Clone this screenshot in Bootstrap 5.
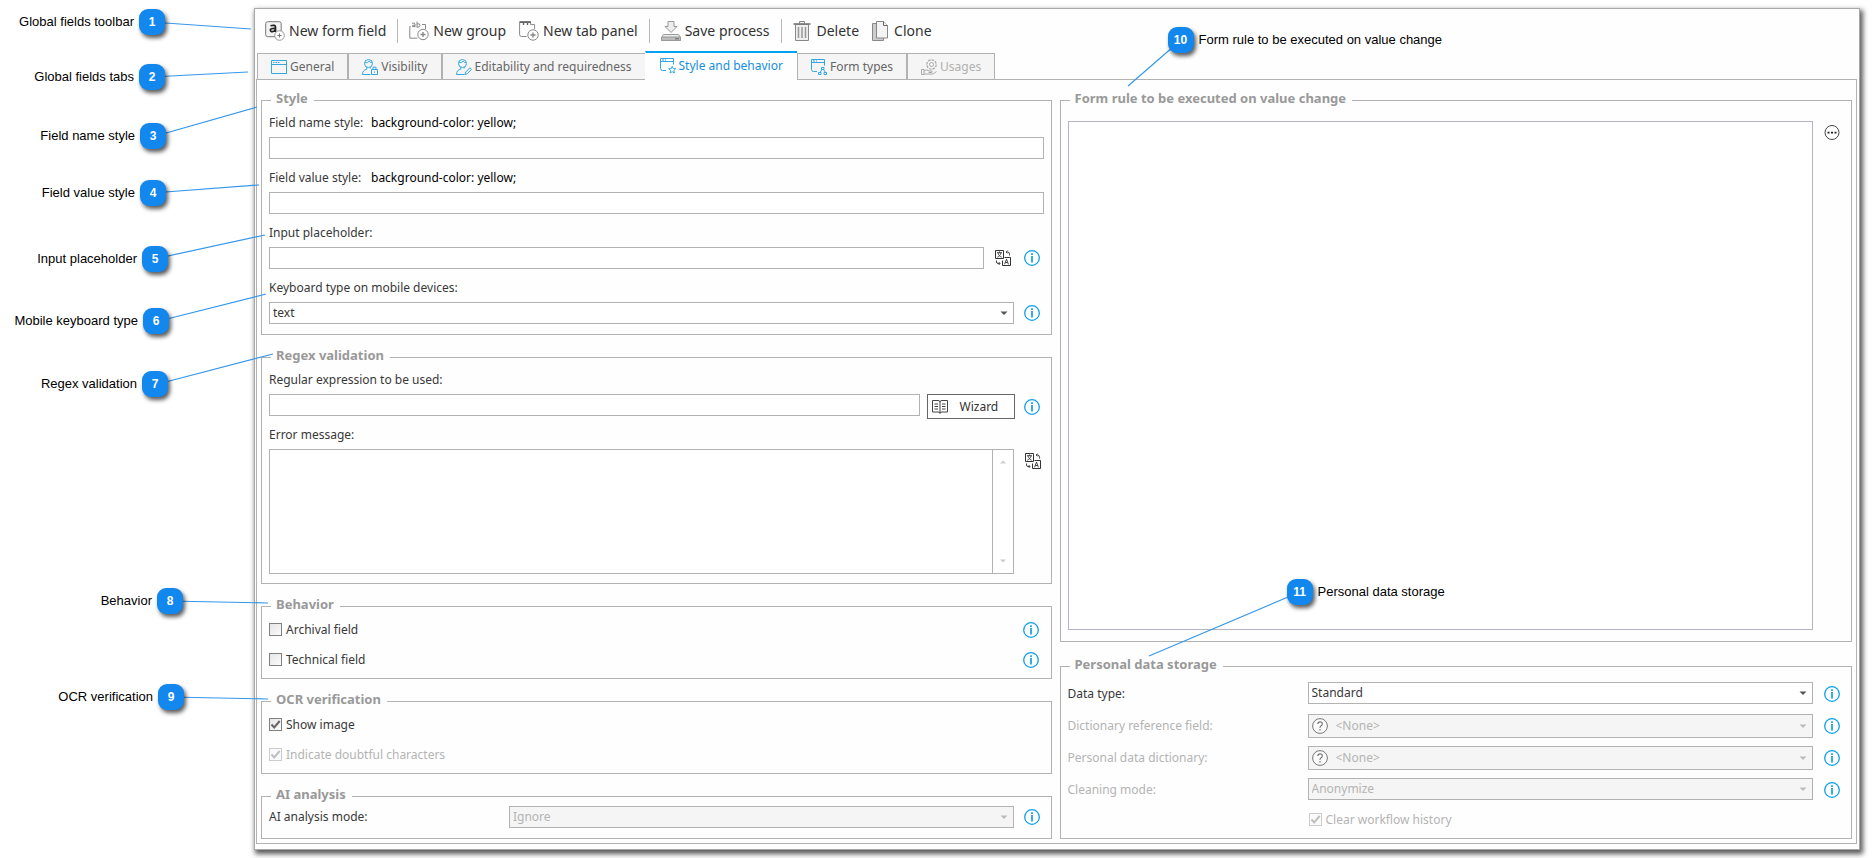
<!doctype html>
<html lang="en">
<head>
<meta charset="utf-8">
<meta name="viewport" content="width=device-width, initial-scale=1">
<title>Global fields – Style and behavior</title>
<link href="https://cdn.jsdelivr.net/npm/bootstrap@5.3.0/dist/css/bootstrap.min.css" rel="stylesheet">
<style>
:root { --line: #b2b2b2; --ink: #383838; --mute: #b4b4b4; --accent: #0f9fe6; --callout: #1287ee; }
body { font: 12px/18px "Noto Sans", sans-serif; color: var(--ink); background: #fff; }
svg { display: block; flex: none; }

.stage { position: relative; padding: 8px 12px 8px 254px; }
.app-window { padding: 0 2px 5px 1px; min-width: 1100px; background: #fefefe;
  border: 1px solid #a8a8a8; box-shadow: 2px 3px 5px 1px rgba(0,0,0,.65); }

/* toolbar */
.toolbar { height: 44px; padding-left: 9px; gap: 13px; }
.tool { display: flex; align-items: center; gap: 4px; padding: 0; border: 0; background: none;
  font: 14px/20px "Noto Sans", sans-serif; color: #333; white-space: nowrap; }
.tool-sep { width: 1px; height: 24px; background: #b8b8b8; }
.toolbar .tool-sep { margin: 0 -2px; }

/* tabs */
.page-tabs { height: 27px; margin-bottom: -1px; padding-left: 1px; }
.page-tabs .tab-btn { display: flex; align-items: center; gap: 3px; height: 27px; padding: 0 13px;
  border: 1px solid var(--line); background: #f5f5f5; color: #666; font: 12px/18px "Noto Sans", sans-serif; white-space: nowrap; }
.page-tabs .tab-btn.active { position: relative; height: 29px; margin: -2px 0 0 -1px; padding: 0 14px;
  border-top: 2px solid #00a2f2; border-bottom-color: #fefefe; border-left-color: #fefefe; border-right: 0; background: #fefefe; color: #1590de; }
.page-tabs .tab-btn:disabled { color: #b0b0b0; }

.tab-body { border: 1px solid var(--line); padding: 11px 4px 4px; display: grid; grid-template-columns: calc(50% - 5px) 1fr; column-gap: 8px; }
.tab-body > div { min-width: 0; }

/* group boxes */
.group { border: 1px solid var(--line); padding: 4px 7px 8px; margin: 0; min-width: 0; }
.group > legend { float: none; width: auto; margin: 0 0 0 2px; padding: 0 6px 4px 5px; font-size: 13px; line-height: 14px; font-weight: 700; color: #999; }
.left-col { gap: 13px; }
.right-col { gap: 15px; }
.group-style { padding-bottom: 10px; }
.group-regex { padding-bottom: 9px; }
.group-checks { padding-top: 5px; }
.group-mode { padding-top: 1px; padding-bottom: 10px; }
.group-rule { padding-top: 12px; padding-bottom: 11px; }
.group-data { padding-top: 7px; }

.cap { display: block; margin-bottom: 4px; line-height: 20px; }
.cap-name { width: 102px; }
.cap-sample { color: #000; }
.cap-side { width: 240px; flex: none; }
.field-row + .cap { margin-top: 9px; }
.cap-memo { margin-top: 6px; }
.field-row { padding-right: 4px; }

.box, .pick { display: block; flex: 1 1 0; min-width: 0; height: 22px; border: 1px solid var(--line); border-radius: 0;
  padding: 0 3px; background-color: #fff; color: var(--ink); font: 12px/18px "Noto Sans", sans-serif; }
.box { width: 100%; }
.pick { appearance: none; background-repeat: no-repeat; background-position: right 5px center;
  background-image: url("data:image/svg+xml,%3Csvg xmlns='http://www.w3.org/2000/svg' width='8' height='5'%3E%3Cpath d='M.5.5h7L4 4z' fill='%23555'/%3E%3C/svg%3E"); }
.pick:disabled { color: var(--mute); opacity: 1; background-color: #f5f5f5;
  background-image: url("data:image/svg+xml,%3Csvg xmlns='http://www.w3.org/2000/svg' width='8' height='5'%3E%3Cpath d='M.5.5h7L4 4z' fill='%23bbb'/%3E%3C/svg%3E"); }
.pick-tall { height: 24px; width: 100%; padding-left: 27px; }
.pick-icon { left: 4px; top: 4px; pointer-events: none; }

.icon-btn { padding: 0; border: 0; background: none; color: #333; }
.lang-btn { margin: 0 3px 0 11px; }
.info-btn { padding: 0; border: 0; background: none; color: var(--accent); margin-left: 10px; }
.right-col .info-btn { margin-left: 11px; }
.wizard { width: 88px; height: 25px; margin: 0 -1px 0 7px; padding: 0 4px; border: 1px solid #666; background: #fff; color: #333; gap: 12px; }

.memo { height: 125px; border: 1px solid var(--line); background: #fff; }
.memo textarea, .rule-text { border: 0; resize: none; outline: 0; background: #fff; min-width: 0; }
.memo-bar { width: 21px; border-left: 1px solid var(--line); padding: 10px 6px; color: #ccc; }
.rule-text { border: 1px solid #b4b4c4; display: block; }

.tick-row { height: 20px; padding-right: 5px; }
.tick-row + .tick-row { margin-top: 10px; }
.tick { appearance: none; width: 13px; height: 13px; margin: 0 4px 2px 0; flex: none; border: 1px solid #808080; background: linear-gradient(135deg, #e6e6e6, #fbfbfb); }
.tick:checked { background: url("data:image/svg+xml,%3Csvg xmlns='http://www.w3.org/2000/svg' width='11' height='11'%3E%3Cpath d='M1.5 5.5l2.7 3L9.7 2' fill='none' stroke='%23666' stroke-width='2'/%3E%3C/svg%3E") center, linear-gradient(135deg, #e6e6e6, #fbfbfb); }
.tick:disabled { border-color: #ccc; }
.tick:disabled:checked { background: url("data:image/svg+xml,%3Csvg xmlns='http://www.w3.org/2000/svg' width='11' height='11'%3E%3Cpath d='M1.5 5.5l2.7 3L9.7 2' fill='none' stroke='%23c0c0c0' stroke-width='2'/%3E%3C/svg%3E") center, #fafafa; }
.dim { color: var(--mute); }

.data-row { height: 24px; margin-bottom: 8px; padding-right: 4px; }
.tick-row.indent { padding-left: 241px; }

/* numbered callouts pinned over the window */
.callouts { position: absolute; left: 0; top: 1px; width: 0; height: 0; z-index: 5; font: 13px/18px "Liberation Sans", Arial, sans-serif; color: #000; }
.callouts svg { position: absolute; left: 0; top: 0; overflow: visible; stroke: #3797ea; stroke-width: 1.2; pointer-events: none; }
.pin { position: absolute; left: var(--x); top: var(--y); display: flex; align-items: center; gap: 5px; white-space: nowrap; }
.pin-left { left: auto; right: calc(0px - var(--x) - 26px); }
.pin-num { width: 26px; height: 26px; border-radius: 9px; background: var(--callout); color: #fff; font-weight: 700; font-size: 12px; line-height: 26px; text-align: center; box-shadow: 2px 3px 4px rgba(0,0,0,.65); }
</style>
</head>
<body>

<svg width="0" height="0" class="position-absolute" aria-hidden="true">
  <symbol id="i-info" viewBox="0 0 16 16"><circle cx="8" cy="8" r="7.3" fill="#fff" stroke="currentColor" stroke-width="1.3"/><path d="M8 3.2v1.7M8 6v6.6" stroke="currentColor" stroke-width="1.7"/></symbol>
  <symbol id="i-lang" viewBox="0 0 16 16"><g fill="none" stroke="currentColor"><path d="M.5.5h8v8h-8zM9.500 7.500h6v8h-8v-5"/><path d="M2 2.700h5M4.500 1.500v1.200M6 3c-.4 2-1.800 3.400-3.700 4.200M3 3c.4 2 1.800 3.400 3.700 4.200M9.600 14.300l1.900-5.200 1.900 5.200M10.300 12.500h2.400" stroke-width=".9"/><path d="M11.200 2h1.500q1.800 0 1.800 2.200V5.500M12.500.6L11.200 2l1.300 1.400M1.500 10.500V12q0 1.500 1.500 1.500h1.800M3.700 12l1.300 1.500-1.300 1.500" stroke-width=".9"/></g></symbol>
  <symbol id="i-help" viewBox="0 0 16 16"><circle cx="8" cy="8" r="7.400" fill="#fbfbfb" stroke="#777"/><path d="M5.800 6q.1-2.200 2.300-2.200T10.300 5.900q0 1-1.200 1.800T8 9.700M8 11v1.600" fill="none" stroke="#777" stroke-width="1.200"/></symbol>
  <symbol id="i-window" viewBox="0 0 16 14"><path d="M.5.5h15v13H.5zM.5 4.500h15" fill="none" stroke="#35a7e0"/><path d="M2 2.500h1.500M4.500 2.500H6M7 2.500h1.500" stroke="#35a7e0"/></symbol>
  <symbol id="i-person" viewBox="0 0 16 16"><g fill="none" stroke="#35a7e0"><circle cx="6.500" cy="4.500" r="4"/><path d="M2.700 3.800q3 .3 4.500-1.600 1.200 1.600 3 1.600M4.800 8v2.200Q.5 11 .5 15.500h8M8.200 8v1.500"/></g></symbol>
</svg>

<div class="stage">

<main class="app-window">
  <div class="toolbar d-flex align-items-center" role="toolbar" aria-label="Global fields toolbar">
    <button type="button" class="tool">
      <svg width="20" height="20" viewBox="0 0 20 20" fill="none" stroke="#777"><rect x=".7" y=".7" width="15.500" height="15" rx="2" fill="#f4f4f4"/><path d="M5.500 4.800q5-1.300 5 1.200v5M10.300 7.500q-5-.3-5 1.600c0 2.200 4 2.200 5-.4" stroke="#222" stroke-width="1.700"/><circle cx="14.500" cy="14.500" r="4.800" fill="#fff" stroke="#999"/><path d="M12.500 14.500h4M14.500 12.500v4"/></svg>
      New form field</button>
    <span class="tool-sep"></span>
    <button type="button" class="tool">
      <svg width="20" height="20" viewBox="0 0 20 20" fill="none" stroke="#888"><path d="M1.500 5.500H.8v11.700h7.700M13 3.500h3.500V8"/><path d="M3 2.200q3-.8 3 1v3M6 4.200q-3-.2-3 .8t3 .3M8 .5v6M8 3q3-1 3 1.300T8 6"/><circle cx="14" cy="13.500" r="5.200" fill="#fff"/><path d="M11.500 13.500h5M14 11v5" stroke-width="1.400"/></svg>
      New group</button>
    <button type="button" class="tool">
      <svg width="20" height="20" viewBox="0 0 20 20" fill="none" stroke="#888"><path d="M7.500 15.500H2.500Q.6 15.500.6 13.500V.6h11v3h4V8" /><path d="M1 1.200h11M4.500 1v3M8.500 1v3" stroke="#666" stroke-width="1.400"/><circle cx="14" cy="14" r="5.200" fill="#fff"/><path d="M11.500 14h5M14 11.500v5" stroke-width="1.400"/></svg>
      New tab panel</button>
    <span class="tool-sep"></span>
    <button type="button" class="tool">
      <svg width="20" height="20" viewBox="0 0 20 20" fill="#eee" stroke="#999"><path d="M7 .5h6v5h3l-6 6-6-6h3z"/><path d="M2.500 13.500h15l2 3v3H.5v-3z"/><path d="M.5 16h19v3.500H.5z" fill="#bbb"/><path d="M14 17.800h4" stroke="#666"/></svg>
      Save process</button>
    <span class="tool-sep"></span>
    <button type="button" class="tool">
      <svg width="20" height="20" viewBox="0 0 20 20" fill="#eee" stroke="#888"><path d="M6.500 2.500v-2h5v2M2.500 3.500h13V19.500h-13z"/><path d="M.5 3h17" stroke="#777" stroke-width="1.600"/><path d="M5.500 6v11M9 6v11M12.500 6v11" stroke-width="1.500" stroke="#999"/></svg>
      Delete</button>
    <button type="button" class="tool">
      <svg width="18" height="20" viewBox="0 0 18 20" fill="#f4f4f4" stroke="#888"><path d="M.5 2.500h11v17H.5z" fill="#ccc"/><path d="M4.500.5h7l4 4V17h-11z"/><path d="M11.500.5v4h4" stroke="#666"/></svg>
      Clone</button>
  </div>

  <div class="page-tabs d-flex" role="tablist">
    <button type="button" role="tab" class="tab-btn"><svg width="16" height="14"><use href="#i-window"/></svg>General</button>
    <button type="button" role="tab" class="tab-btn"><svg width="16" height="16"><use href="#i-person"/><path d="M9.500 10.500h6v5h-6zM11 10.500V8.200h3v2.300M12.500 12.500v1.200" fill="#f5f5f5" stroke="#35a7e0"/></svg>Visibility</button>
    <button type="button" role="tab" class="tab-btn"><svg width="16" height="16"><use href="#i-person"/><path d="M9 15.500l.6-2.400 4.300-4.300 1.600 1.600-4.300 4.300z" fill="#f5f5f5" stroke="#35a7e0"/></svg>Editability and requiredness</button>
    <button type="button" role="tab" class="tab-btn active" aria-selected="true"><svg width="16" height="16" fill="none" stroke="#35a7e0"><path d="M6 12.500H2.500q-2 0-2-2V.5h13v6M.5 3.500h13M2 2h2M5 2h1"/><path d="M12.200 8.300l1 2.300 2.500.2-1.900 1.700.6 2.500-2.200-1.300L10 15l.6-2.500-1.900-1.700 2.500-.2z"/></svg>Style and behavior</button>
    <button type="button" role="tab" class="tab-btn"><svg width="16" height="16" fill="none" stroke="#35a7e0"><path d="M6 12.500H2.500q-2 0-2-2V.5h13v6M.5 3.500h13M2 2h2M5 2h1"/><path d="M10.500 8.500h2.500v2h-2.500zM7.500 13.500H10v2H7.500zM13 13.500h2.500v2H13zM11 10.500l-2 3M12.500 10.500l2 3"/></svg>Form types</button>
    <button type="button" role="tab" class="tab-btn" disabled><svg width="16" height="16" fill="none" stroke="#aaa"><circle cx="10.500" cy="5.500" r="2"/><circle cx="10.500" cy="5.500" r="4.700" stroke-width="1.300" stroke-dasharray="2.600 1"/><path d="M.5 10.500H3v5H.5zM3 11.500q3-1.300 5 .5h3v1.500H7.500M3 15h9l3.500-2.500"/></svg>Usages</button>
  </div>

  <div class="tab-body">
    <div class="left-col d-flex flex-column">

      <fieldset class="group group-style">
        <legend>Style</legend>
        <label class="cap d-flex" for="nameStyle"><span class="cap-name">Field name style:</span><span class="cap-sample">background-color: yellow;</span></label>
        <div class="field-row d-flex pe-0"><input id="nameStyle" type="text" class="box"></div>
        <label class="cap d-flex" for="valueStyle"><span class="cap-name">Field value style:</span><span class="cap-sample">background-color: yellow;</span></label>
        <div class="field-row d-flex pe-0"><input id="valueStyle" type="text" class="box"></div>
        <label class="cap" for="placeholderText">Input placeholder:</label>
        <div class="field-row d-flex align-items-center">
          <input id="placeholderText" type="text" class="box">
          <button type="button" class="icon-btn lang-btn" aria-label="Translate"><svg width="16" height="16"><use href="#i-lang"/></svg></button>
          <button type="button" class="info-btn" aria-label="Info"><svg width="16" height="16"><use href="#i-info"/></svg></button>
        </div>
        <label class="cap" for="keyboardType">Keyboard type on mobile devices:</label>
        <div class="field-row d-flex align-items-center">
          <select id="keyboardType" class="pick"><option>text</option></select>
          <button type="button" class="info-btn" aria-label="Info"><svg width="16" height="16"><use href="#i-info"/></svg></button>
        </div>
      </fieldset>

      <fieldset class="group group-regex">
        <legend>Regex validation</legend>
        <label class="cap" for="regex">Regular expression to be used:</label>
        <div class="d-flex align-items-start pe-1">
          <input id="regex" type="text" class="box">
          <button type="button" class="wizard d-flex align-items-center"><svg width="16" height="14" viewBox="0 0 16 14" fill="none" stroke="#444"><path d="M.5.500h5.500q2 0 2 1.500 0-1.500 2-1.500h5.500v11.500H10q-2 0-2 1.500 0-1.500-2-1.500H.5zM8 2v11M2.500 4h3.500M2.500 6.500h3.500M2.500 9h3.500M10 4h3.500M10 6.500h3.500M10 9h3.500"/></svg>Wizard</button>
          <button type="button" class="info-btn align-self-center" aria-label="Info"><svg width="16" height="16"><use href="#i-info"/></svg></button>
        </div>
        <label class="cap cap-memo" for="errorMsg">Error message:</label>
        <div class="d-flex align-items-start">
          <div class="memo d-flex flex-grow-1">
            <textarea id="errorMsg" class="flex-grow-1"></textarea>
            <div class="memo-bar d-flex flex-column justify-content-between" aria-hidden="true">
              <svg width="8" height="4"><path d="M1 3.500h6L4 .5z" fill="currentColor"/></svg>
              <svg width="8" height="4"><path d="M1 .5h6L4 3.500z" fill="currentColor"/></svg>
            </div>
          </div>
          <button type="button" class="icon-btn lang-btn mt-1" aria-label="Translate"><svg width="16" height="16"><use href="#i-lang"/></svg></button>
        </div>
      </fieldset>

      <fieldset class="group group-checks">
        <legend>Behavior</legend>
        <div class="tick-row d-flex align-items-center"><input class="tick" type="checkbox" id="archival"><label for="archival">Archival field</label><button type="button" class="info-btn ms-auto" aria-label="Info"><svg width="16" height="16"><use href="#i-info"/></svg></button></div>
        <div class="tick-row d-flex align-items-center"><input class="tick" type="checkbox" id="technical"><label for="technical">Technical field</label><button type="button" class="info-btn ms-auto" aria-label="Info"><svg width="16" height="16"><use href="#i-info"/></svg></button></div>
      </fieldset>

      <fieldset class="group group-checks">
        <legend>OCR verification</legend>
        <div class="tick-row d-flex align-items-center"><input class="tick" type="checkbox" id="showImage" checked><label for="showImage">Show image</label></div>
        <div class="tick-row d-flex align-items-center"><input class="tick" type="checkbox" id="doubtful" checked disabled><label for="doubtful" class="dim">Indicate doubtful characters</label></div>
      </fieldset>

      <fieldset class="group group-mode">
        <legend>AI analysis</legend>
        <div class="field-row d-flex align-items-center">
          <label class="cap-side" for="aiMode">AI analysis mode:</label>
          <select id="aiMode" class="pick" disabled><option>Ignore</option></select>
          <button type="button" class="info-btn" aria-label="Info"><svg width="16" height="16"><use href="#i-info"/></svg></button>
        </div>
      </fieldset>
    </div>

    <div class="right-col d-flex flex-column position-relative">
      <fieldset class="group group-rule flex-grow-1 d-flex flex-column">
        <legend>Form rule to be executed on value change</legend>
        <div class="d-flex align-items-stretch flex-grow-1 pe-1">
          <textarea class="rule-text flex-grow-1" aria-label="Form rule"></textarea>
          <button type="button" class="icon-btn info-btn align-self-start mt-1" aria-label="Edit rule"><svg width="16" height="16" viewBox="0 0 16 16"><circle cx="8" cy="7.500" r="7" fill="#fff" stroke="#444"/><path d="M3.500 6.800h2v1.600h-2zM7 6.800h2v1.600H7zM10.500 6.800h2v1.600h-2z" fill="#222"/></svg></button>
        </div>
      </fieldset>

      <fieldset class="group group-data">
        <legend>Personal data storage</legend>
        <div class="data-row d-flex align-items-center">
          <label class="cap-side" for="dataType">Data type:</label>
          <select id="dataType" class="pick align-self-start"><option>Standard</option></select>
          <button type="button" class="info-btn" aria-label="Info"><svg width="16" height="16"><use href="#i-info"/></svg></button>
        </div>
        <div class="data-row d-flex align-items-center">
          <label class="cap-side dim" for="dictField">Dictionary reference field:</label>
          <div class="position-relative flex-grow-1"><select id="dictField" class="pick pick-tall" disabled><option>&lt;None&gt;</option></select><svg class="pick-icon position-absolute" width="16" height="16"><use href="#i-help"/></svg></div>
          <button type="button" class="info-btn" aria-label="Info"><svg width="16" height="16"><use href="#i-info"/></svg></button>
        </div>
        <div class="data-row d-flex align-items-center">
          <label class="cap-side dim" for="persDict">Personal data dictionary:</label>
          <div class="position-relative flex-grow-1"><select id="persDict" class="pick pick-tall" disabled><option>&lt;None&gt;</option></select><svg class="pick-icon position-absolute" width="16" height="16"><use href="#i-help"/></svg></div>
          <button type="button" class="info-btn" aria-label="Info"><svg width="16" height="16"><use href="#i-info"/></svg></button>
        </div>
        <div class="data-row d-flex align-items-center">
          <label class="cap-side dim" for="cleanMode">Cleaning mode:</label>
          <select id="cleanMode" class="pick align-self-start" disabled><option>Anonymize</option></select>
          <button type="button" class="info-btn" aria-label="Info"><svg width="16" height="16"><use href="#i-info"/></svg></button>
        </div>
        <div class="tick-row indent d-flex align-items-center"><input class="tick" type="checkbox" id="clearHist" checked disabled><label for="clearHist" class="dim">Clear workflow history</label></div>
      </fieldset>

      <div class="callouts">
        <svg width="1" height="1"><path d="M121-52L68-6M240 500L89 564" fill="none"/></svg>
        <div class="pin" style="--x:108px;--y:-65px"><span class="pin-num">10</span>Form rule to be executed on value change</div>
        <div class="pin" style="--x:227px;--y:487px"><span class="pin-num">11</span>Personal data storage</div>
      </div>
    </div>
  </div>
</main>

<div class="callouts">
  <svg width="1" height="1"><path d="M151 21L251 28M151 76L248 71M152 136L257 106M152 192L259 184M154 258L265 234M155 321L266 293M154 384L273 353M169 600L268 602M170 696L268 698" fill="none"/></svg>
  <div class="pin pin-left" style="--x:139px;--y:8px">Global fields toolbar<span class="pin-num">1</span></div>
  <div class="pin pin-left" style="--x:139px;--y:63px">Global fields tabs<span class="pin-num">2</span></div>
  <div class="pin pin-left" style="--x:140px;--y:122px">Field name style<span class="pin-num">3</span></div>
  <div class="pin pin-left" style="--x:140px;--y:179px">Field value style<span class="pin-num">4</span></div>
  <div class="pin pin-left" style="--x:142px;--y:245px">Input placeholder<span class="pin-num">5</span></div>
  <div class="pin pin-left" style="--x:143px;--y:307px">Mobile keyboard type<span class="pin-num">6</span></div>
  <div class="pin pin-left" style="--x:142px;--y:370px">Regex validation<span class="pin-num">7</span></div>
  <div class="pin pin-left" style="--x:157px;--y:587px">Behavior<span class="pin-num">8</span></div>
  <div class="pin pin-left" style="--x:158px;--y:683px">OCR verification<span class="pin-num">9</span></div>
</div>

</div>
<script src="https://cdn.jsdelivr.net/npm/bootstrap@5.3.0/dist/js/bootstrap.bundle.min.js"></script>
</body>
</html>
